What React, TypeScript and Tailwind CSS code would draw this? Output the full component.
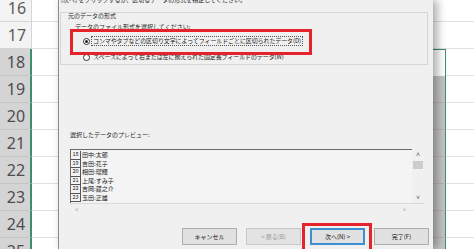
const rowNums = [16, 17, 18, 19, 20, 21, 22, 23, 24, 25];

const preview = [
  ["18", "田中:太郎"],
  ["19", "吉田:花子"],
  ["20", "相田:瑠輝"],
  ["21", "上尾:すみ子"],
  ["22", "吉岡:蔵之介"],
  ["23", "玉田:正雄"],
];

const RowHeader = () => (
  <div className="-mt-[5px] flex w-[32px] shrink-0 flex-col">
    {rowNums.map((n) => (
      <div
        key={n}
        className={
          n >= 18
            ? "flex h-[27px] shrink-0 items-center justify-center border-b border-r-2 border-b-[#c4c4c4] border-r-[#3f8e6b] bg-[#d4d4d4] pl-[2px] text-[16px] text-[#4d4d4d]"
            : "flex h-[27px] shrink-0 items-center justify-center border-b border-r border-b-[#d6d6d6] border-r-[#d6d6d6] bg-[#f3f3f3] pl-[3px] text-[16px] text-[#5a5a5a]"
        }
      >
        {n}
      </div>
    ))}
  </div>
);

const CellCol = ({ width }: { width: string }) => (
  <div className={`-mt-[5px] flex shrink-0 flex-col ${width}`}>
    {rowNums.map((n) => (
      <div key={n} className="h-[27px] shrink-0 border-b border-[#e1e1e1] bg-white" />
    ))}
  </div>
);

const SelectedCol = () => (
  <div className="-mt-[5px] flex w-[13px] shrink-0 flex-col">
    {rowNums.map((n) => (
      <div
        key={n}
        className={
          n === 18
            ? "h-[27px] shrink-0 border-r border-t border-[#3f8e6b] bg-white"
            : n > 18
            ? "h-[27px] shrink-0 border-b border-r border-b-[#b4b4b4] border-r-[#3f8e6b] bg-[#c4c4c4]"
            : "h-[27px] shrink-0 border-b border-[#e1e1e1] bg-white"
        }
      />
    ))}
  </div>
);

const Radio = ({ checked }: { checked?: boolean }) => (
  <span className="flex h-[7px] w-[7px] shrink-0 items-center justify-center rounded-full border border-[#333] bg-white">
    {checked && <span className="h-[3px] w-[3px] rounded-full bg-[#222]" />}
  </span>
);

const Button = ({ label, dim, focus }: { label: string; dim?: boolean; focus?: boolean }) => (
  <div
    className={
      focus
        ? "flex h-[17px] w-[55px] items-center justify-center border-2 border-[#3d8fd1] bg-[#e1e1e1] text-[6px] text-[#111]"
        : dim
        ? "flex h-[17px] w-[55px] items-center justify-center border border-[#c8c8c8] bg-[#e3e3e3] text-[6px] text-[#9a9a9a]"
        : "flex h-[17px] w-[55px] items-center justify-center border border-[#adadad] bg-[#e1e1e1] text-[6px] text-[#111]"
    }
  >
    {label}
  </div>
);

const Dialog = () => (
  <div className="relative z-10 flex h-full w-[375px] shrink-0 flex-col border-l border-[#8c8c8c] bg-[#f0f0f0] font-['Noto_Sans_CJK_JP',sans-serif] text-[#1a1a1a] shadow-[4px_0_9px_rgba(0,0,0,0.35)]">
    <div className="h-[12px] overflow-hidden pl-[2px]">
      <p className="-mt-[4px] text-[6px] leading-[8px]">[次へ] をクリックするか、区切るデータの形式を指定してください。</p>
    </div>

    <div className="ml-[1px] h-[53px] w-[368px] border border-[#d6d6d6] pl-[7px]">
      <p className="text-[6px] leading-[6px]">元のデータの形式</p>
      <p className="mt-[5px] pl-[7px] text-[6px] leading-[6px]">データのファイル形式を選択してください:</p>
      <div className="mt-[6px] flex h-[10px] items-center gap-[1px] pl-[15px]">
        <Radio checked />
        <span className="border border-dotted border-[#555] px-[1px] text-[6px] leading-[8px] tracking-[-0.1px]">
          コンマやタブなどの区切り文字によってフィールドごとに区切られたデータ(D)
        </span>
      </div>
      <div className="mt-[7px] flex h-[8px] items-center gap-[2px] pl-[15px]">
        <Radio />
        <span className="pl-[1px] text-[6px] leading-[8px] tracking-[-0.1px]">
          スペースによって右または左に揃えられた固定長フィールドのデータ(W)
        </span>
      </div>
    </div>

    <p className="ml-[11px] mt-[66px] text-[6px] leading-[8px]">選択したデータのプレビュー:</p>

    <div className="ml-[11px] mt-[10px] flex w-[354px] flex-col">
      <div className="flex h-[54px]">
        <div className="flex w-[342px] flex-col overflow-hidden border-l border-t border-[#6a6a6a] bg-[#f4f4f4] pt-[1px]">
          {preview.map(([n, name]) => (
            <div key={n} className="flex h-[8.5px] shrink-0 items-center">
              <span className="flex h-full w-[10px] items-center justify-center border-b border-r border-[#555] text-[5.5px] leading-none">
                {n}
              </span>
              <span className="pl-[1px] text-[6px] leading-none">{name}</span>
            </div>
          ))}
        </div>
        <div className="flex w-[12px] flex-col items-center bg-[#f0f0f0] text-[7px] leading-none text-[#606060]">
          <span className="mt-[2px]">˄</span>
          <span className="mt-[3px] h-[8px] w-[10px] bg-[#cdcdcd]" />
          <span className="mt-auto mb-[2px]">˅</span>
        </div>
      </div>
      <div className="flex h-[12px] items-center justify-between border-t border-[#dadada] px-[5px] text-[6px] text-[#a0a0a0]">
        <span>&lt;</span>
        <span className="mr-[13px]">&gt;</span>
      </div>
    </div>

    <div className="ml-[123px] mt-[13px] flex gap-[9px]">
      <Button label="キャンセル" />
      <Button label="< 戻る(B)" dim />
      <Button label="次へ(N) >" focus />
      <Button label="完了(F)" />
    </div>
  </div>
);

export default function App() {
  return (
    <div className="relative flex h-[249px] w-[474px] overflow-hidden bg-white font-['Noto_Sans',sans-serif]">
      <RowHeader />
      <CellCol width="w-[26px]" />
      <Dialog />
      <SelectedCol />
      <CellCol width="w-[28px]" />

      <div className="absolute left-[70px] top-[29px] z-20 h-[26px] w-[242px] border-[3px] border-[#e5232b]" />
      <div className="absolute left-[302px] top-[223px] z-20 h-[32px] w-[70px] border-[3px] border-[#e5232b]" />
    </div>
  );
}
